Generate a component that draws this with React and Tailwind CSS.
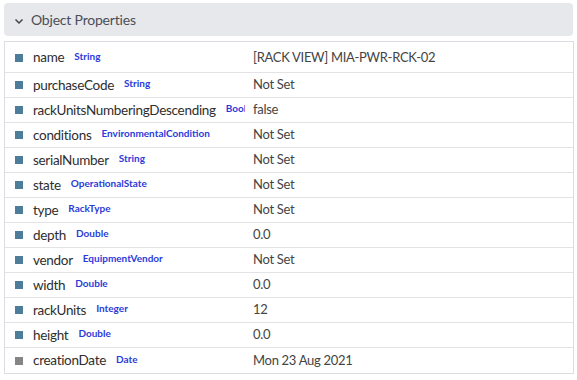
import React from "react";

const rows = [
  ["name", "String", "[RACK VIEW] MIA-PWR-RCK-02"],
  ["purchaseCode", "String", "Not Set"],
  ["rackUnitsNumberingDescending", "Boolean", "false"],
  ["conditions", "EnvironmentalCondition", "Not Set"],
  ["serialNumber", "String", "Not Set"],
  ["state", "OperationalState", "Not Set"],
  ["type", "RackType", "Not Set"],
  ["depth", "Double", "0.0"],
  ["vendor", "EquipmentVendor", "Not Set"],
  ["width", "Double", "0.0"],
  ["rackUnits", "Integer", "12"],
  ["height", "Double", "0.0"],
  ["creationDate", "Date", "Mon 23 Aug 2021", true],
];

export default function App() {
  return (
    <div
      className="w-[577px] h-[380px] bg-white pt-[3px] pl-[4px] pr-[4px]"
      style={{ fontFamily: 'Lato, "Noto Sans", sans-serif' }}
    >
      <div className="h-[33px] bg-[#e6e8ec] rounded-[4px] flex items-center pl-[10px] text-[#4a4f57]">
        <svg width="10" height="8" viewBox="0 0 10 8" className="mr-[7px] mt-[2px]">
          <path d="M1.5 2.5 L5 6 L8.5 2.5" fill="none" stroke="#444" strokeWidth="1.5" />
        </svg>
        <span className="text-[14px] tracking-[-0.2px]">Object Properties</span>
      </div>
      <div className="mt-[5px] border border-[#dcdde2] w-[570px]">
        {rows.map(([k, t, v, gray], i) => (
          <div
            key={k}
            className={`flex items-center ${i === 0 ? "h-[31px] pt-[1px]" : "h-[25px]"} ${i < rows.length - 1 ? "border-b border-[#e3e3e6]" : ""}`}
          >
            <div className="w-[240px] flex items-center overflow-hidden whitespace-nowrap">
              <div className={`ml-[10px] w-[8px] h-[8px] shrink-0 ${gray ? "bg-[#858585]" : "bg-[#4d7d99]"}`} />
              <span className="ml-[10px] text-[13.5px] tracking-[-0.3px] text-[#2e2e2e]">{k}</span>
              <span className="ml-[10px] -mt-[3px] text-[10px] font-bold text-[#2b3bd9]">{t}</span>
            </div>
            <div className="pl-[8px] text-[13px] tracking-[-0.3px] text-[#444] whitespace-nowrap">{v}</div>
          </div>
        ))}
      </div>
    </div>
  );
}
